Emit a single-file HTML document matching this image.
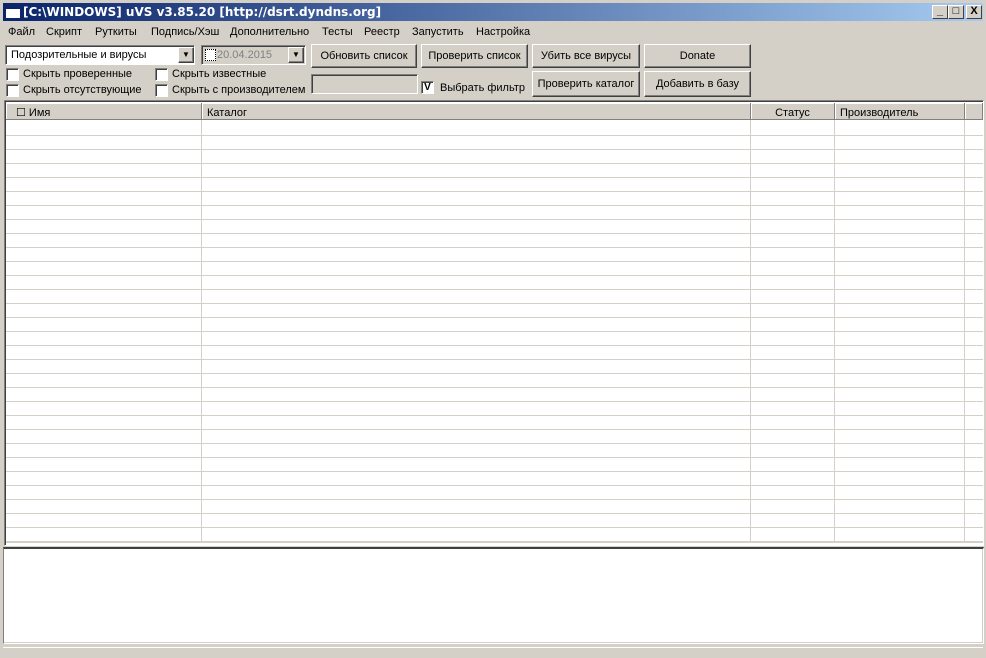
<!DOCTYPE html>
<html><head><meta charset="utf-8"><style>
*{box-sizing:border-box;margin:0;padding:0}
body{width:986px;height:658px;background:#d4d0c8;font-family:"Liberation Sans",sans-serif;font-size:11px;color:#000;position:relative;overflow:hidden}
.a{position:absolute}
.btn{position:absolute;background:#d4d0c8;border:1px solid;border-color:#fff #404040 #404040 #fff;box-shadow:inset -1px -1px #808080;text-align:center;font-size:11px}
.sunk{position:absolute;border:1px solid;border-color:#808080 #fff #fff #808080;box-shadow:inset 1px 1px #404040}
.cb{position:absolute;width:13px;height:13px;background:#fff;border:1px solid;border-color:#808080 #fff #fff #808080;box-shadow:inset 1px 1px #404040}
.tb{position:absolute;top:5px;width:16px;height:14px;background:#d4d0c8;border:1px solid;border-color:#fff #404040 #404040 #fff;font-size:11px;font-weight:bold;text-align:center;line-height:11px}
.hd{position:absolute;top:0;height:17px;border-right:1px solid #808080;border-bottom:1px solid #808080;box-shadow:inset 1px 1px #fff;line-height:21px;padding-left:5px}
.m{position:absolute;top:26px}
</style></head><body>
<div class="a" style="left:3px;top:3px;width:980px;height:18px;background:linear-gradient(to right,#0a246a,#a6caf0)"></div>
<div class="a" style="left:6px;top:7px;width:14px;height:11px;background:#fff;border-top:2px solid #0a246a"></div>
<div class="a" style="left:23px;top:4px;color:#fff;font-weight:bold;font-size:12px;line-height:16px;font-family:'DejaVu Sans',sans-serif">[C:\WINDOWS] uVS v3.85.20 [http://dsrt.dyndns.org]</div>
<div class="tb" style="left:932px">_</div><div class="tb" style="left:948px">□</div><div class="tb" style="left:966px">X</div>
<span class="m" style="left:8px">Файл</span><span class="m" style="left:46px">Скрипт</span><span class="m" style="left:95px">Руткиты</span><span class="m" style="left:151px">Подпись/Хэш</span><span class="m" style="left:230px">Дополнительно</span><span class="m" style="left:322px">Тесты</span><span class="m" style="left:364px">Реестр</span><span class="m" style="left:412px">Запустить</span><span class="m" style="left:476px">Настройка</span>

<div class="sunk" style="left:5px;top:45px;width:190px;height:20px;background:#fff"><span class="a" style="left:5px;top:3px">Подозрительные и вирусы</span>
<div class="btn" style="left:172px;top:1px;width:16px;height:16px;line-height:14px;font-size:8px">▼</div></div>
<div class="sunk" style="left:201px;top:45px;width:105px;height:20px;background:#d4d0c8"><div class="a" style="left:3px;top:3px;width:11px;height:12px;border:1px dotted #000;background:#fff"></div><span class="a" style="left:15px;top:3px;color:#808080">20.04.2015</span>
<div class="btn" style="left:86px;top:1px;width:16px;height:16px;line-height:14px;font-size:8px">▼</div></div>

<div class="btn" style="left:311px;top:44px;width:106px;height:24px;line-height:22px">Обновить список</div>
<div class="btn" style="left:421px;top:44px;width:107px;height:24px;line-height:22px">Проверить список</div>
<div class="btn" style="left:532px;top:44px;width:108px;height:24px;line-height:22px">Убить все вирусы</div>
<div class="btn" style="left:644px;top:44px;width:107px;height:24px;line-height:22px">Donate</div>
<div class="btn" style="left:532px;top:71px;width:108px;height:26px;line-height:24px">Проверить каталог</div>
<div class="btn" style="left:644px;top:71px;width:107px;height:26px;line-height:24px">Добавить в базу</div>

<div class="cb" style="left:6px;top:68px"></div><span class="a" style="left:23px;top:68px">Скрыть проверенные</span>
<div class="cb" style="left:6px;top:84px"></div><span class="a" style="left:23px;top:84px">Скрыть отсутствующие</span>
<div class="cb" style="left:155px;top:68px"></div><span class="a" style="left:172px;top:68px">Скрыть известные</span>
<div class="cb" style="left:155px;top:84px"></div><span class="a" style="left:172px;top:84px">Скрыть с производителем</span>
<div class="sunk" style="left:311px;top:74px;width:107px;height:20px"></div>
<div class="cb" style="left:421px;top:81px;font-size:10px;font-weight:bold;line-height:11px;text-align:center">V</div><span class="a" style="left:440px;top:82px">Выбрать фильтр</span>

<div class="a" style="left:4px;top:100px;width:980px;height:446px;border:1px solid;border-color:#808080 #fff #fff #808080;box-shadow:inset 1px 1px #404040;background:#fff;overflow:hidden">
<div class="a" style="left:1px;top:1px;width:977px;height:444px;background:repeating-linear-gradient(to bottom,transparent 0,transparent 13px,#d4d0c8 13px,#d4d0c8 14px);background-position:0 20px"></div>
<div class="a" style="left:1px;top:1px;width:977px;height:19px;background:#fff"></div>
<div class="a" style="left:196px;top:18px;width:1px;height:424px;background:#d4d0c8"></div>
<div class="a" style="left:745px;top:18px;width:1px;height:424px;background:#d4d0c8"></div>
<div class="a" style="left:829px;top:18px;width:1px;height:424px;background:#d4d0c8"></div>
<div class="a" style="left:959px;top:18px;width:1px;height:424px;background:#d4d0c8"></div>
<div class="a" style="left:1px;top:441px;width:977px;height:4px;background:#fff;border-top:1px solid #d4d0c8"></div>
<div class="a" style="left:1px;top:2px;width:977px;height:17px;background:#d4d0c8">
<div class="hd" style="left:0;width:196px;padding-left:10px">☐ Имя</div>
<div class="hd" style="left:196px;width:549px">Каталог</div>
<div class="hd" style="left:745px;width:84px;text-align:center;padding-left:0">Статус</div>
<div class="hd" style="left:829px;width:130px">Производитель</div>
<div class="hd" style="left:959px;width:18px"></div>
</div></div>

<div class="a" style="left:3px;top:547px;width:981px;height:97px;border:1px solid;border-color:#404040 #fff #fff #808080;border-top-width:2px;background:#fff;box-shadow:inset -1px -1px #d4d0c8"></div>
<div class="a" style="left:3px;top:647px;width:980px;height:8px;background:#d4d0c8;border-top:1px solid #fff"></div>
</body></html>
